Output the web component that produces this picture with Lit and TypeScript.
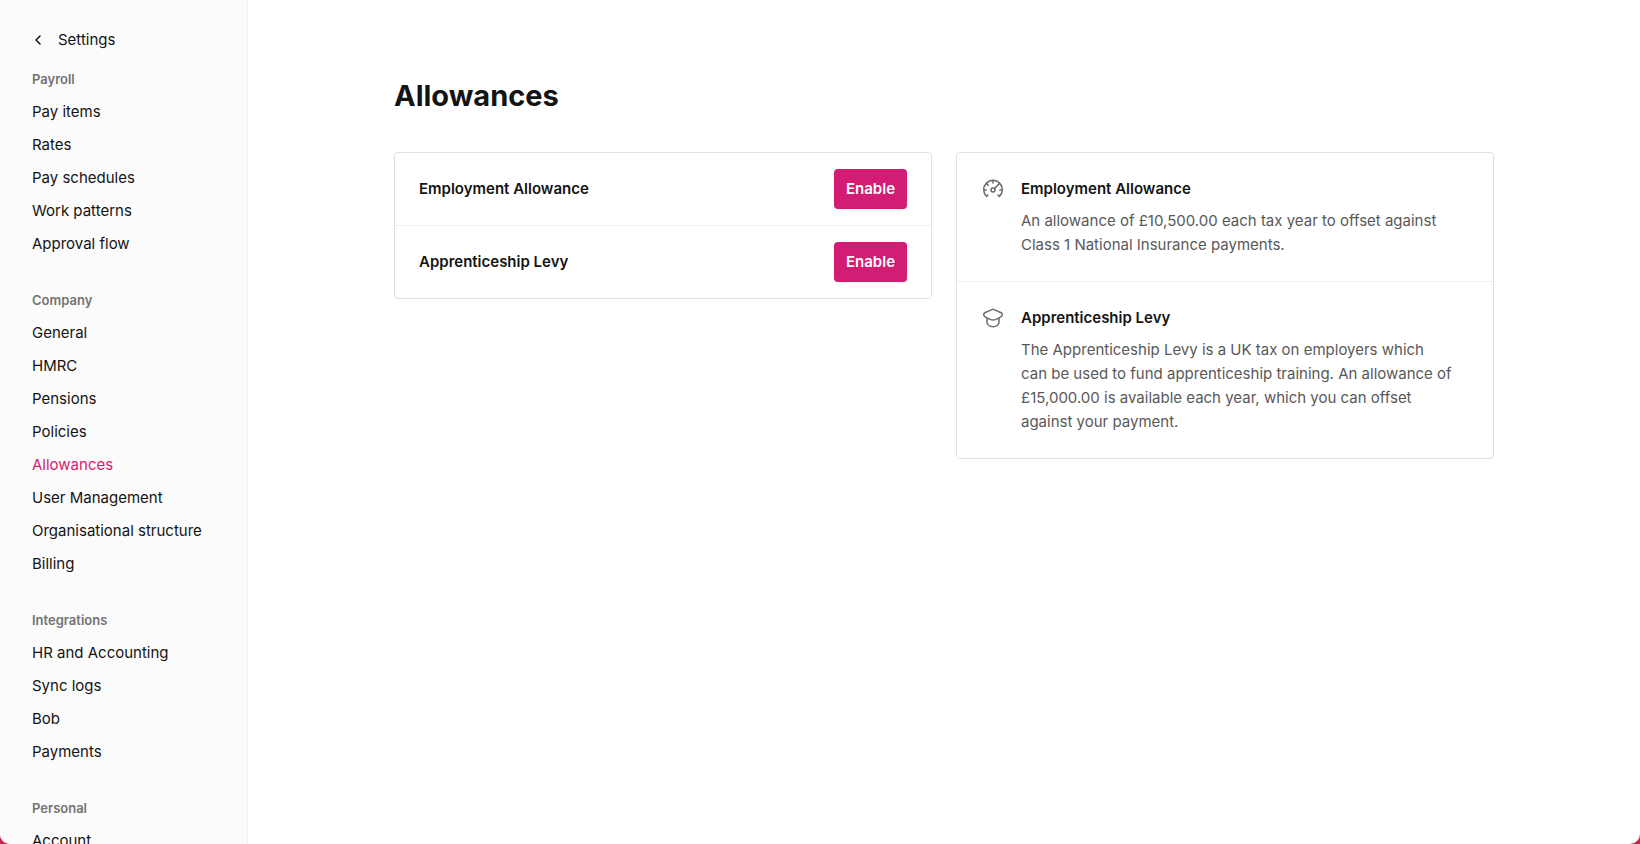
import { LitElement, css, html, svg } from "lit";
import { customElement } from "lit/decorators.js";
import { classMap } from "lit/directives/class-map.js";

interface NavSection {
  title: string;
  items: string[];
}

interface Allowance {
  title: string;
  description: string;
  icon: unknown;
}

const SECTIONS: NavSection[] = [
  { title: "Payroll", items: ["Pay items", "Rates", "Pay schedules", "Work patterns", "Approval flow"] },
  {
    title: "Company",
    items: [
      "General",
      "HMRC",
      "Pensions",
      "Policies",
      "Allowances",
      "User Management",
      "Organisational structure",
      "Billing",
    ],
  },
  { title: "Integrations", items: ["HR and Accounting", "Sync logs", "Bob", "Payments"] },
  { title: "Personal", items: ["Account"] },
];

const gaugeIcon = svg`
  <path d="M6.9 18 5.6 19.4A9.3 9.3 0 1 1 18.4 19.4L17.100 18" />
  <circle cx="12" cy="13" r="2" />
  <path d="M13.4 11.6 18.2 6.8M12 3.600v2.400M5.600 6.600l1.600 1.600M3 13h2.200M18.800 13h2.200" />`;

const capIcon = svg`
  <path d="M10.9 3.6Q12 3.1 13.1 3.6L20.2 6.700Q21.800 7.600 21.200 9.200Q20.800 10.300 19.500 11Q17.500 12.400 14.300 13.600Q12 14.400 9.700 13.600Q6.500 12.400 4.500 11Q3.200 10.300 2.800 9.200Q2.200 7.600 3.800 6.700Z" />
  <path d="M6 12.200V16Q6 18.300 7.800 19.500Q9.600 20.700 12 20.700Q14.400 20.700 16.200 19.500Q18 18.300 18 16V12.200" />`;

const ALLOWANCES: Allowance[] = [
  {
    title: "Employment Allowance",
    description: "An allowance of £10,500.00 each tax year to offset against\nClass 1 National Insurance payments.",
    icon: gaugeIcon,
  },
  {
    title: "Apprenticeship Levy",
    description:
      "The Apprenticeship Levy is a UK tax on employers which\ncan be used to fund apprenticeship training. An allowance of\n£15,000.00 is available each year, which you can offset\nagainst your payment.",
    icon: capIcon,
  },
];

@customElement("settings-nav")
export class SettingsNav extends LitElement {
  static styles = css`
    :host {
      display: block;
      box-sizing: border-box;
      width: 248px;
      flex: none;
      overflow: hidden;
      padding: 28px 32px 0;
      background: #fbfbfb;
      border-right: 1px solid #f0f0f0;
    }
    .back {
      display: flex;
      align-items: center;
      gap: 14px;
      height: 24px;
      margin-bottom: 11px;
      color: #141414;
      text-decoration: none;
    }
    .chevron {
      width: 12px;
      height: 12px;
      fill: none;
      stroke: currentColor;
      stroke-width: 1.5;
      stroke-linecap: round;
      stroke-linejoin: round;
    }
    .section {
      margin-bottom: 24px;
    }
    .title {
      margin: 0;
      font-size: 13px;
      line-height: 32px;
      font-weight: 600;
      color: #737373;
    }
    .list {
      list-style: none;
      margin: 0;
      padding: 0;
    }
    .link {
      display: block;
      line-height: 33px;
      white-space: nowrap;
      color: #141414;
      text-decoration: none;
    }
    .link.active {
      color: #d31c73;
    }
  `;

  render() {
    return html`
      <nav aria-label="Settings">
        <a class="back" href="#">
          <svg class="chevron" viewBox="0 0 12 12" aria-hidden="true"><path d="M8 2 4 6l4 4" /></svg>
          <span>Settings</span>
        </a>
        ${SECTIONS.map(
          (section) => html`
            <section class="section">
              <h2 class="title">${section.title}</h2>
              <ul class="list">
                ${section.items.map(
                  (item) => html`<li>
                    <a class=${classMap({ link: true, active: item === "Allowances" })} href="#">${item}</a>
                  </li>`
                )}
              </ul>
            </section>
          `
        )}
      </nav>
    `;
  }
}

@customElement("app-root")
export class AppRoot extends LitElement {
  static styles = css`
    :host {
      display: block;
      height: 100vh;
      background: #cf2350;
      font-family: Inter, "Liberation Sans", sans-serif;
      font-size: 15px;
      line-height: 24px;
      color: #141414;
    }
    .window {
      display: flex;
      height: 100%;
      overflow: hidden;
      background: #fff;
      border-radius: 0 0 10px 10px;
    }
    .main {
      flex: 1;
      min-width: 0;
      overflow: auto;
      padding: 76px 40px 40px;
    }
    .content {
      max-width: 1100px;
      margin: 0 auto;
    }
    .heading {
      margin: 0 0 36px;
      font-size: 29px;
      line-height: 40px;
      font-weight: 700;
    }
    .columns {
      display: grid;
      grid-template-columns: 1fr 1fr;
      gap: 24px;
      align-items: start;
    }
    .card {
      border: 1px solid #e0e0e0;
      border-radius: 4px;
    }
    .row + .row {
      border-top: 1px solid #f0f0f0;
    }
    .setting {
      display: flex;
      align-items: center;
      justify-content: space-between;
      padding: 16px 24px;
    }
    .name {
      margin: 0;
      font-size: 15px;
      line-height: 24px;
      font-weight: 600;
    }
    .enable {
      height: 40px;
      padding: 0 12px;
      border: 0;
      border-radius: 4px;
      background: #d31c73;
      box-shadow: 0 1px 3px rgba(0, 0, 0, 0.08);
      color: #fff;
      font: inherit;
      font-weight: 600;
    }
    .info {
      display: flex;
      gap: 16px;
      padding: 24px;
    }
    .icon {
      flex: none;
      width: 24px;
      height: 24px;
      fill: none;
      stroke: #6b6b6b;
      stroke-width: 1.5;
      stroke-linecap: round;
      stroke-linejoin: round;
    }
    .description {
      margin: 8px 0 0;
      white-space: pre-line;
      color: #595959;
    }
  `;

  render() {
    return html`
      <div class="window">
        <settings-nav></settings-nav>
        <main class="main">
          <div class="content">
            <h1 class="heading">Allowances</h1>
            <div class="columns">
              <div class="card">
                ${ALLOWANCES.map(
                  (a) => html`<div class="row setting">
                    <h2 class="name">${a.title}</h2>
                    <button class="enable" type="button" aria-label="Enable ${a.title}">Enable</button>
                  </div>`
                )}
              </div>
              <div class="card">
                ${ALLOWANCES.map(
                  (a) => html`<div class="row info">
                    <svg class="icon" viewBox="0 0 24 24" aria-hidden="true">${a.icon}</svg>
                    <div>
                      <h3 class="name">${a.title}</h3>
                      <p class="description">${a.description}</p>
                    </div>
                  </div>`
                )}
              </div>
            </div>
          </div>
        </main>
      </div>
    `;
  }
}
